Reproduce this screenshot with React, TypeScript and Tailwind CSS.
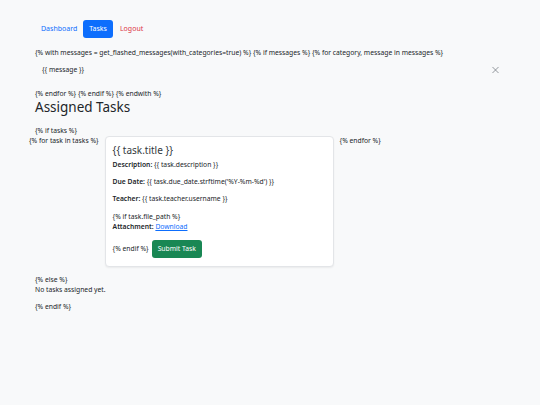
import { X } from "lucide-react";

export default function App() {
  return (
    <div className="min-h-screen bg-[#f8f9fa] font-['Noto_Sans',sans-serif] text-[#212529] text-[6.75px] leading-[1.5]">
      <div className="px-[35px] pt-[20px]">
        <nav className="flex items-center text-[7px]">
          <a className="px-[6px] py-[4px] text-[#0d6efd]">Dashboard</a>
          <a className="px-[6px] h-[18px] flex items-center rounded-[3px] bg-[#0d6efd] text-white">Tasks</a>
          <a className="px-[7px] py-[4px] text-[#dc3545]">Logout</a>
        </nav>

        <div className="mt-[9px]">
          {"{% with messages = get_flashed_messages(with_categories=true) %} {% if messages %} {% for category, message in messages %}"}
        </div>

        <div className="relative mb-[7px] py-[7px] pl-[7px] pr-[24px]">
          {"{{ message }}"}
          <button className="absolute right-[4px] top-1/2 -translate-y-1/2 text-[#5c636a]">
            <X size={11} strokeWidth={1.4} />
          </button>
        </div>

        <div>{"{% endfor %} {% endif %} {% endwith %}"}</div>
        <h2 className="text-[13.5px] leading-[1.2] mb-[8px]">Assigned Tasks</h2>

        <div className="mt-[11px]">{"{% if tasks %}"}</div>
        <div className="flex -mx-[6px]">
          <span className="whitespace-nowrap">{"{% for task in tasks %}"}</span>
          <div className="w-[241px] px-[6px] shrink-0">
            <div className="mb-[8px] rounded-[4px] border border-[#e3e5e8] bg-white px-[7px] pt-[7px] pb-[8px] shadow-[0_1px_2px_rgba(0,0,0,0.06)]">
              <h5 className="text-[10px] leading-[1.2] mb-[4px] text-[#343a40]">{"{{ task.title }}"}</h5>
              <p className="mb-[7px]">
                <strong className="font-semibold">Description:</strong> {"{{ task.description }}"}
              </p>
              <p className="mb-[7px]">
                <strong className="font-semibold">Due Date:</strong> {"{{ task.due_date.strftime('%Y-%m-%d') }}"}
              </p>
              <p className="mb-[7px]">
                <strong className="font-semibold">Teacher:</strong> {"{{ task.teacher.username }}"}
              </p>
              <div>{"{% if task.file_path %}"}</div>
              <p className="mb-[8px]">
                <strong className="font-semibold">Attachment:</strong>{" "}
                <a className="text-[#0d6efd] underline">Download</a>
              </p>
              <div className="flex items-center gap-[3px]">
                <span>{"{% endif %}"}</span>
                <button className="h-[18px] px-[6px] rounded-[3px] bg-[#198754] text-white text-[6.75px]">Submit Task</button>
              </div>
            </div>
          </div>
          <span className="whitespace-nowrap">{"{% endfor %}"}</span>
        </div>

        <div>{"{% else %}"}</div>
        <p className="mb-[7px]">No tasks assigned yet.</p>
        <div>{"{% endif %}"}</div>
      </div>
    </div>
  );
}
